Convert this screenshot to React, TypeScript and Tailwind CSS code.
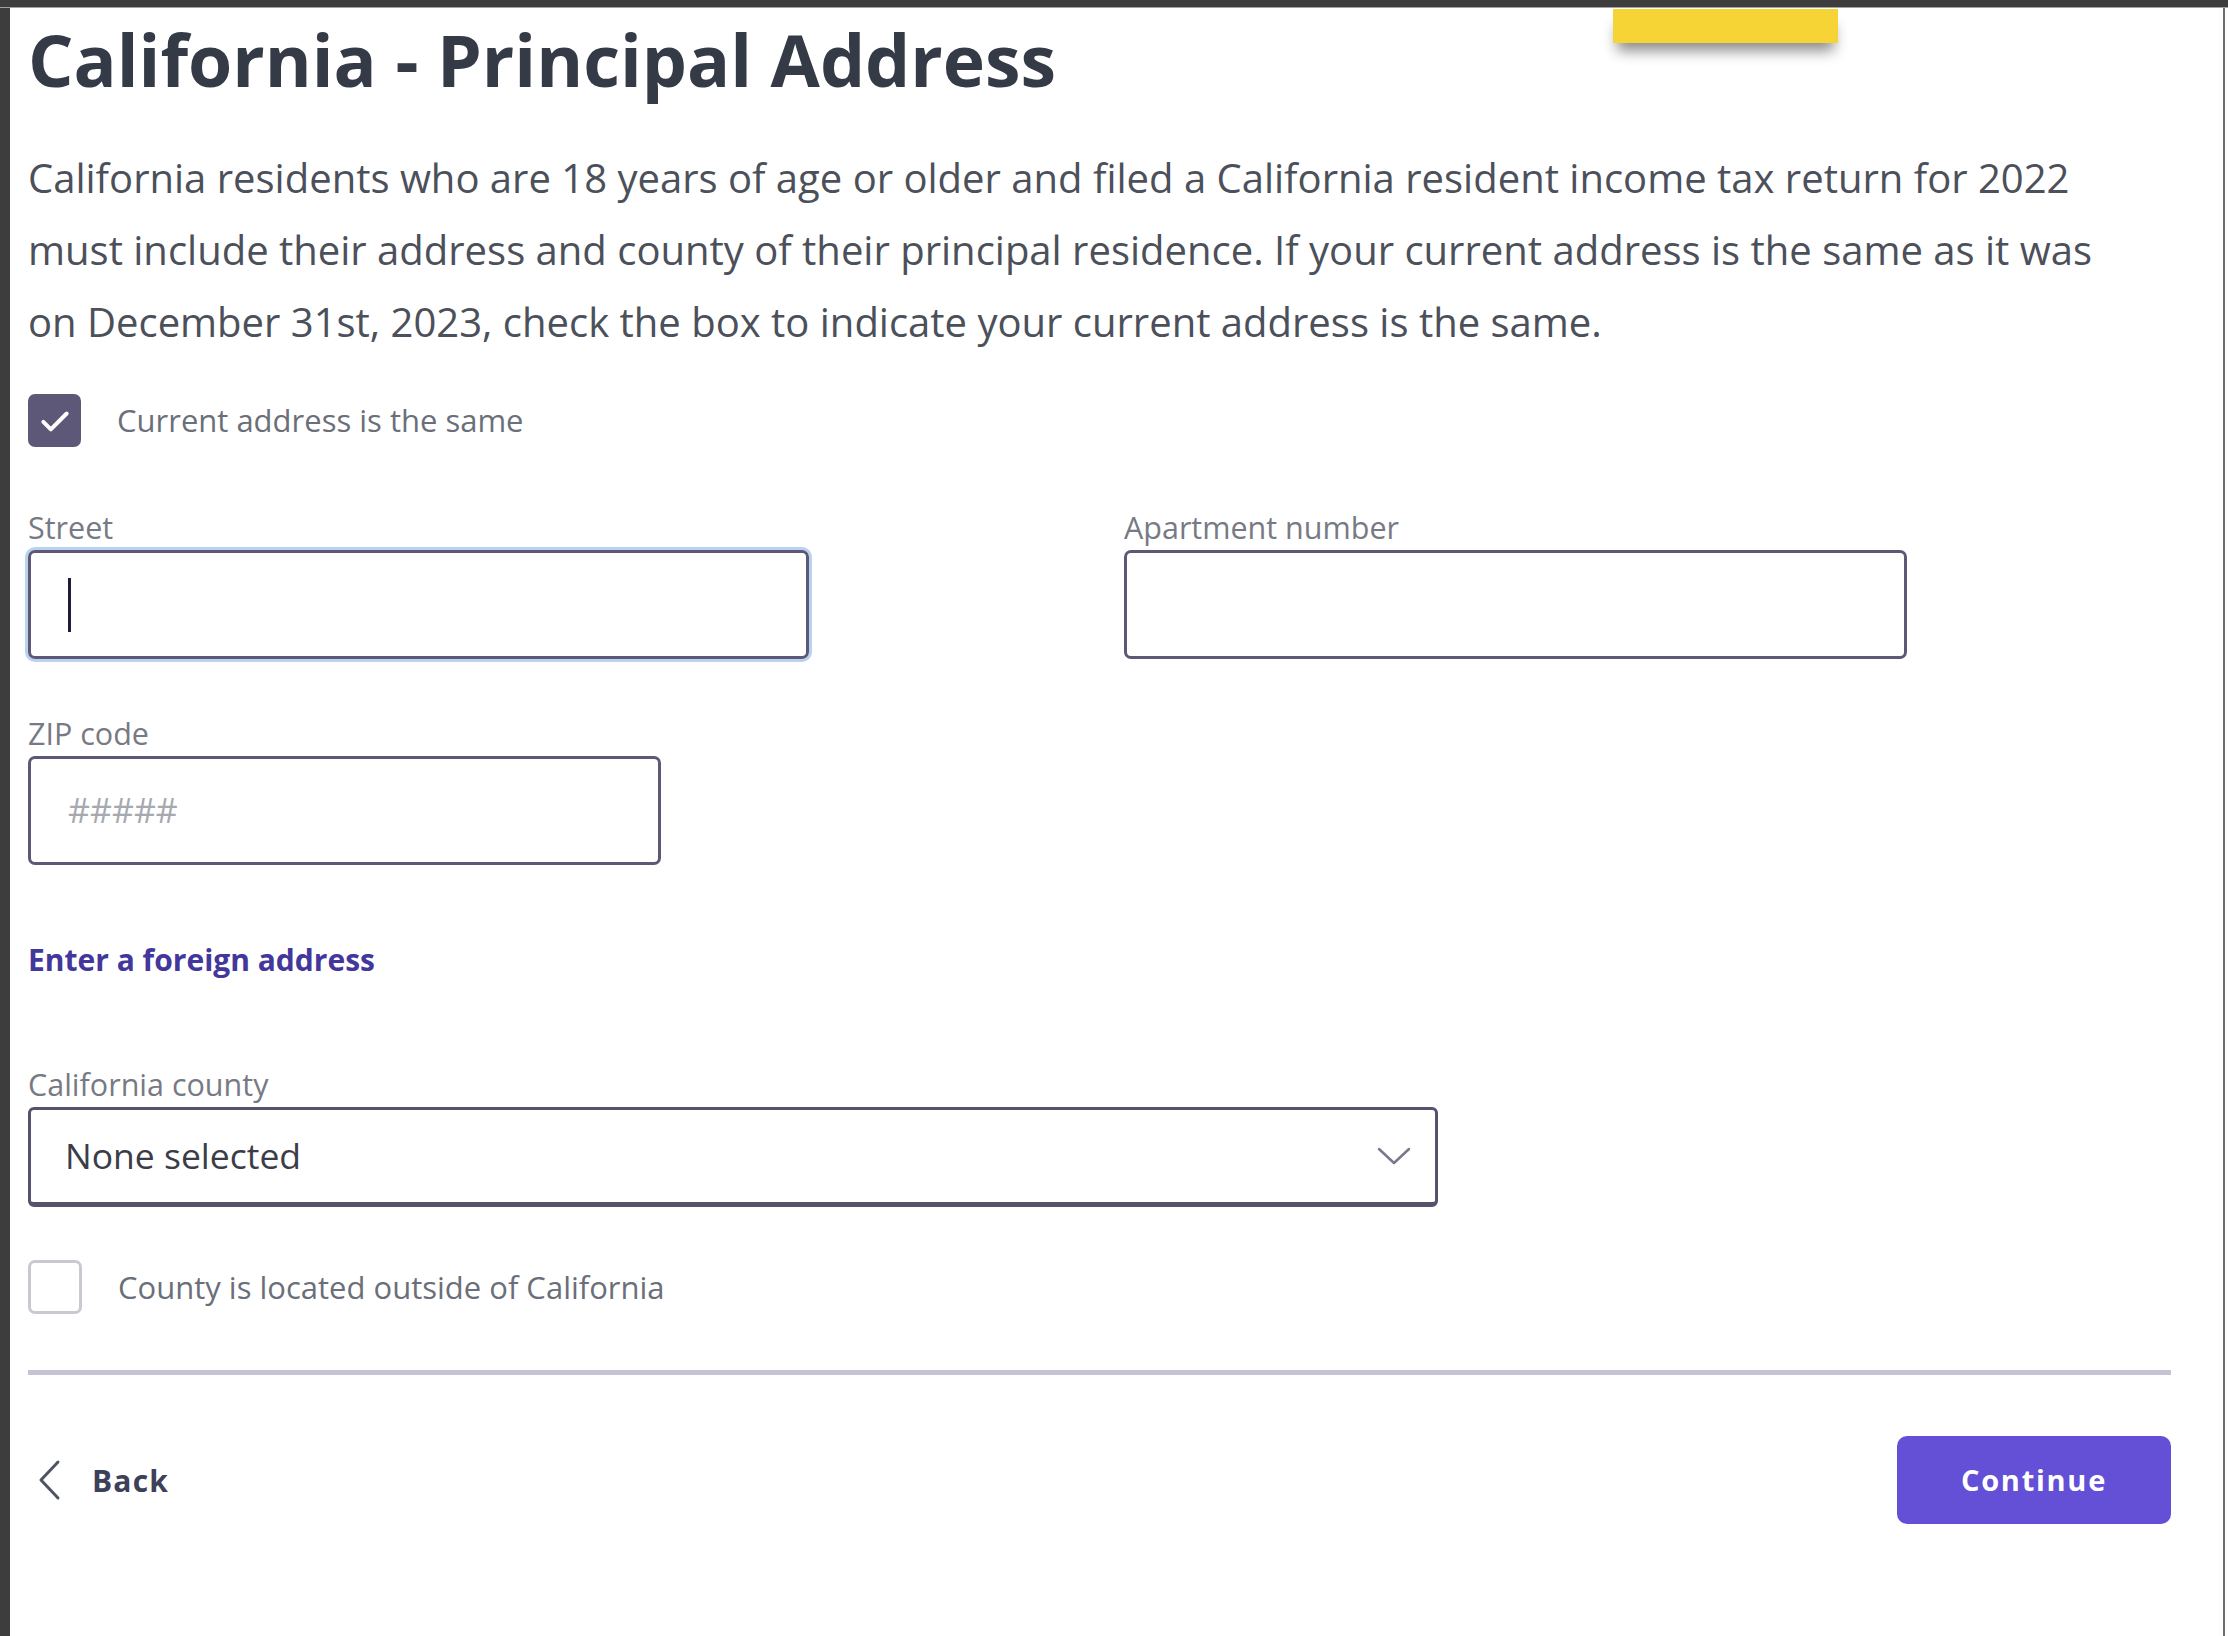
import React from "react";

const CheckIcon = () => (
  <svg width="40" height="40" viewBox="0 0 24 24" fill="none">
    <path
      d="M5 12.5l4.5 4.5L19 7.5"
      stroke="white"
      strokeWidth="2.4"
      strokeLinecap="round"
      strokeLinejoin="round"
    />
  </svg>
);

const Label = ({ children }: { children: React.ReactNode }) => (
  <div className="text-[30.5px] leading-[36px] text-[#777a84] mb-[5px] whitespace-nowrap">
    {children}
  </div>
);

export default function App() {
  return (
    <div className="relative w-[2228px] h-[1636px] bg-white flex flex-col font-['Open_Sans',sans-serif] overflow-hidden">
      {/* window frame top */}
      <div className="h-[8px] bg-[#3d3d3d] border-b border-[#a3a3a3]" />

      <div className="flex flex-1">
        <div className="w-[10px] bg-[#3d3d3d]" />

        <main className="flex-1 flex flex-col pl-[18px] pr-[52px]">
          <h1 className="mt-[16px] text-[71.5px] leading-[72px] font-bold text-[#343a46] whitespace-nowrap">
            California - Principal Address
          </h1>

          <p className="mt-[46px] text-[40px] leading-[72px] text-[#4b505a] whitespace-nowrap">
            California residents who are 18 years of age or older and filed a
            California resident income tax return for 2022
            <br />
            must include their address and county of their principal
            residence. If your current address is the same as it was
            <br />
            on December 31st, 2023, check the box to indicate your current
            address is the same.
          </p>

          {/* current address checkbox */}
          <div className="mt-[36px] flex items-center gap-[36px]">
            <div className="w-[53px] h-[53px] rounded-[7px] bg-[#5d5877] flex items-center justify-center">
              <CheckIcon />
            </div>
            <span className="text-[31px] text-[#6b6f79]">
              Current address is the same
            </span>
          </div>

          {/* street + apartment */}
          <div className="mt-[62px] grid grid-cols-[1096px_783px]">
            <div>
              <Label>Street</Label>
              <div className="w-[781px] h-[109px] rounded-[7px] border-[3px] border-[#5c5876] ring-[3px] ring-[#b9d2f0] flex items-center pl-[37px]">
                <span className="w-[3px] h-[54px] bg-[#1f1c3b]" />
              </div>
            </div>
            <div>
              <Label>Apartment number</Label>
              <div className="w-[783px] h-[109px] rounded-[7px] border-[3px] border-[#5c5876]" />
            </div>
          </div>

          {/* zip */}
          <div className="mt-[56px]">
            <Label>ZIP code</Label>
            <div className="w-[633px] h-[109px] rounded-[7px] border-[3px] border-[#5c5876] flex items-center pl-[37px] text-[34px] text-[#a6a9b0]">
              #####
            </div>
          </div>

          <a className="mt-[77px] self-start text-[30px] leading-[36px] font-bold text-[#43379c] whitespace-nowrap cursor-pointer">
            Enter a foreign address
          </a>

          {/* county select */}
          <div className="mt-[88px]">
            <Label>California county</Label>
            <div className="w-[1410px] h-[100px] rounded-[6px] border-[3px] border-b-[5px] border-[#55516f] flex items-center justify-between pl-[34px] pr-[24px]">
              <span className="text-[35.5px] text-[#3a3d48]">None selected</span>
              <svg width="34" height="20" viewBox="0 0 34 20" fill="none">
                <polyline
                  points="2,3 17,17 32,3"
                  stroke="#7a788c"
                  strokeWidth="2.5"
                  strokeLinecap="round"
                  strokeLinejoin="round"
                />
              </svg>
            </div>
          </div>

          {/* outside california checkbox */}
          <div className="mt-[53px] flex items-center gap-[36px]">
            <div className="w-[54px] h-[54px] rounded-[7px] border-[3px] border-[#c9c9d1] bg-white" />
            <span className="text-[31px] text-[#6b6f79]">
              County is located outside of California
            </span>
          </div>

          <div className="mt-[56px] h-[5px] bg-[#c5c3d4]" />

          {/* footer */}
          <div className="mt-[61px] flex items-center justify-between">
            <button className="flex items-center gap-[30px] pl-[8px]">
              <svg width="26" height="42" viewBox="0 0 26 42" fill="none">
                <polyline
                  points="22,3 5,21 22,39"
                  stroke="#4f5363"
                  strokeWidth="3"
                  strokeLinecap="round"
                  strokeLinejoin="round"
                />
              </svg>
              <span className="text-[30px] font-bold tracking-[0.04em] text-[#3d405a]">
                Back
              </span>
            </button>
            <button className="w-[274px] h-[88px] rounded-[10px] bg-[#644fd7] text-white text-[29px] font-bold tracking-[0.06em]">
              Continue
            </button>
          </div>
        </main>

        <div className="w-[2px] bg-[#6b6b6b]" />
        <div className="w-[3px]" />
      </div>

      {/* yellow tab overlay */}
      <div className="absolute left-[1613px] top-[9px] w-[225px] h-[34px] bg-[#f6d435] shadow-[0_12px_14px_-4px_rgba(0,0,0,0.45)]" />
    </div>
  );
}
